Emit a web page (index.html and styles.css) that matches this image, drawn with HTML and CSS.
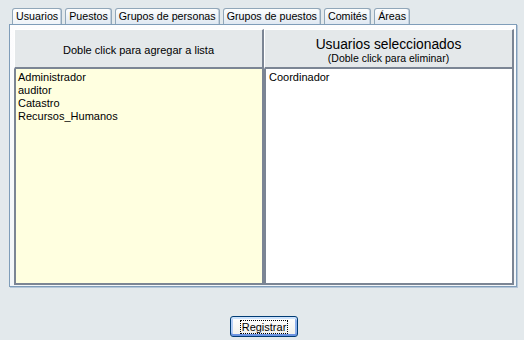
FILE: index.html
```html
<!DOCTYPE html>
<html>
<head lang="es">
    <meta charset="UTF-8">
    <title>Usuarios</title>
    <link rel="stylesheet" href="styles.css">
</head>
<body>

<div id="tabs">
    <div class="tab current">Usuarios</div>
    <div class="tab">Puestos</div>
    <div class="tab">Grupos de personas</div>
    <div class="tab">Grupos de puestos</div>
    <div class="tab">Comités</div>
    <div class="tab">Áreas</div>
</div>

<div id="page">
    <div class="col">
        <div class="head">Doble click para agregar a lista</div>
        <ul class="list avail">
            <li>Administrador</li>
            <li>auditor</li>
            <li>Catastro</li>
            <li>Recursos_Humanos</li>
        </ul>
    </div>
    <div class="col">
        <div class="head">
            <div class="big">Usuarios seleccionados</div>
            <div class="small">(Doble click para eliminar)</div>
        </div>
        <ul class="list chosen">
            <li>Coordinador</li>
        </ul>
    </div>
</div>

<div id="actions">
    <button class="btn"><span>Registrar</span></button>
</div>

</body>
</html>
```

FILE: styles.css
```css
body{
    margin: 0;
    background: #e3e9ec;
    font-family: "Liberation Sans", Arial, sans-serif;
    font-size: 11px;
    color: #000;
}
#tabs{
    display: flex;
    gap: 3px;
    margin: 8px 0 0 12px;
    height: 16px;
}
.tab{
    padding: 0 3px;
    font-size: 10.7px;
    line-height: 15px;
    border: 1px solid #91a7b9;
    border-bottom: none;
    border-radius: 3px 3px 0 0;
    background: linear-gradient(#fdfefe, #dfe8f2);
    box-shadow: inset -1px 0 0 #c3d0de;
}
.tab.current{
    background: linear-gradient(#ffffff, #eef3f8);
}
#page{
    display: flex;
    box-sizing: border-box;
    width: 508px;
    margin-left: 9px;
    padding: 4px 2px 1px 4px;
    border: 1px solid #7f9db9;
    background: linear-gradient(#fdfdfe, #f3f6f9);
    box-shadow: 1px 1px 0 #b6c6d8;
}
.col{
    display: flex;
    flex-direction: column;
    width: 250px;
    height: 256px;
}
.head{
    display: flex;
    flex-direction: column;
    justify-content: center;
    align-items: center;
    box-sizing: border-box;
    height: 40px;
    padding-top: 3px;
    background: #e4e8ea;
    border-top: 1px solid #fff;
    border-left: 1px solid #fff;
    border-right: 2px solid #7b8594;
    border-bottom: 2px solid #7b8594;
}
.big{
    font-size: 13.8px;
    line-height: 15px;
    padding-top: 1px;
}
.small{
    font-size: 10.5px;
    line-height: 12px;
}
.list{
    flex: 1;
    margin: 0;
    padding: 2px 2px;
    list-style: none;
    border: 2px solid #7b8594;
    border-top: none;
    line-height: 13px;
}
.avail{
    background: #ffffe0;
}
.chosen{
    background: #fff;
    padding-left: 3px;
}
#actions{
    display: flex;
    justify-content: center;
    padding: 29px 0 0 4px;
}
.btn{
    width: 68px;
    height: 21px;
    padding: 0;
    font-family: "Liberation Sans", Arial, sans-serif;
    font-size: 11px;
    color: #000;
    border: 1px solid #003c74;
    border-radius: 3px;
    background: linear-gradient(#ffffff, #f0f0ea);
    box-shadow: inset 0 2px 0 #cee3fc, inset 0 -2px 0 #6c94e2, inset 2px 0 0 #b5cff8, inset -2px 0 0 #8db0ec;
}
.btn span{
    border: 1px dotted #000;
    padding: 0 1px;
}
```
